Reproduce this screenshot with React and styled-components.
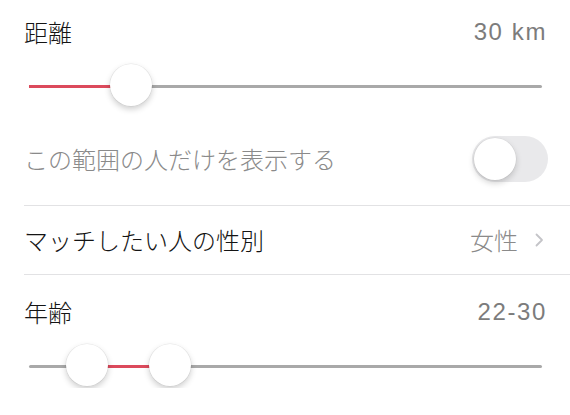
import React from 'react';
import styled, { createGlobalStyle } from 'styled-components';

const GlobalStyle = createGlobalStyle`
  html, body {
    margin: 0;
    padding: 0;
    background: #ffffff;
  }
  body {
    font-family: 'Noto Sans CJK JP', 'Liberation Sans', sans-serif;
  }
`;

const SingleSlider = ({ value }) => (
  <SliderBox>
    <Track>
      <Fill style={{ left: 0, width: `${value}%` }} />
      <Thumb style={{ left: `${value}%` }} />
    </Track>
  </SliderBox>
);

const RangeSlider = ({ low, high }) => (
  <SliderBox>
    <Track>
      <Fill style={{ left: `${low}%`, width: `${high - low}%` }} />
      <Thumb style={{ left: `${low}%` }} />
      <Thumb style={{ left: `${high}%` }} />
    </Track>
  </SliderBox>
);

const App = () => {
  return (
    <>
      <GlobalStyle />
      <Page>
        <Section>
          <HeaderRow>
            <Label>距離</Label>
            <Value>30 km</Value>
          </HeaderRow>
          <SingleSlider value={19.9} />
          <ToggleRow>
            <Label muted>この範囲の人だけを表示する</Label>
            <Toggle>
              <Knob />
            </Toggle>
          </ToggleRow>
        </Section>
        <LinkRow>
          <Label>マッチしたい人の性別</Label>
          <LinkValue>
            <Label muted>女性</Label>
            <svg width="9" height="14" viewBox="0 0 9 14">
              <polyline
                points="1.5,1.5 7,7 1.5,12.5"
                fill="none"
                stroke="#c4c4c8"
                strokeWidth="1.8"
                strokeLinecap="round"
                strokeLinejoin="round"
              />
            </svg>
          </LinkValue>
        </LinkRow>
        <AgeSection>
          <HeaderRow>
            <Label>年齢</Label>
            <Value>22-30</Value>
          </HeaderRow>
          <RangeSlider low={11.3} high={27.5} />
        </AgeSection>
      </Page>
    </>
  );
};

const Page = styled.div`
  width: 570px;
  padding-left: 24px;
  box-sizing: border-box;
`;

const Section = styled.div`
  padding: 16px 24px 23px 0;
  border-bottom: 1px solid #e2e2e4;
`;

const AgeSection = styled.div`
  padding: 21px 24px 0 0;
`;

const HeaderRow = styled.div`
  height: 32px;
  display: flex;
  align-items: center;
  justify-content: space-between;
`;

const Label = styled.span`
  font-family: 'Noto Sans CJK JP', sans-serif;
  font-size: 24px;
  font-weight: 300;
  line-height: 32px;
  color: ${({ muted }) => (muted ? '#8a8a8a' : '#141414')};
`;

const Value = styled.span`
  font-family: 'Liberation Sans', 'Noto Sans CJK JP', sans-serif;
  font-size: 24px;
  letter-spacing: 1.6px;
  margin-right: -1px;
  line-height: 32px;
  color: #7c7c7c;
`;

const SliderBox = styled.div`
  height: 44px;
  margin-top: 16px;
  padding: 0 4px 0 5px;
  display: flex;
  align-items: center;
`;

const Track = styled.div`
  position: relative;
  flex: 1;
  height: 3px;
  border-radius: 2px;
  background: #a9a9a9;
`;

const Fill = styled.div`
  position: absolute;
  top: 0;
  height: 100%;
  background: #dc4a5c;
`;

const Thumb = styled.div`
  position: absolute;
  top: 50%;
  width: 42px;
  height: 42px;
  margin: -22px 0 0 -21px;
  border-radius: 50%;
  background: #ffffff;
  box-shadow: 0 0 0 0.5px rgba(0, 0, 0, 0.08), 0 3px 6px rgba(0, 0, 0, 0.2);
`;

const ToggleRow = styled.div`
  margin-top: 28px;
  height: 46px;
  display: flex;
  align-items: center;
  justify-content: space-between;
`;

const Toggle = styled.div`
  width: 76px;
  height: 46px;
  margin-right: -2px;
  border-radius: 23px;
  background: #e9e9eb;
  display: flex;
  align-items: center;
  padding: 0 2px;
  box-sizing: border-box;
`;

const Knob = styled.div`
  width: 42px;
  height: 42px;
  border-radius: 50%;
  background: #ffffff;
  box-shadow: 0 0 0 0.5px rgba(0, 0, 0, 0.06), 0 3px 6px rgba(0, 0, 0, 0.18);
`;

const LinkRow = styled.div`
  height: 68px;
  padding-right: 24px;
  display: flex;
  align-items: center;
  justify-content: space-between;
  border-bottom: 1px solid #e2e2e4;
`;

const LinkValue = styled.div`
  display: flex;
  align-items: center;
  gap: 17px;
  margin-right: 2px;
`;

export default App;
